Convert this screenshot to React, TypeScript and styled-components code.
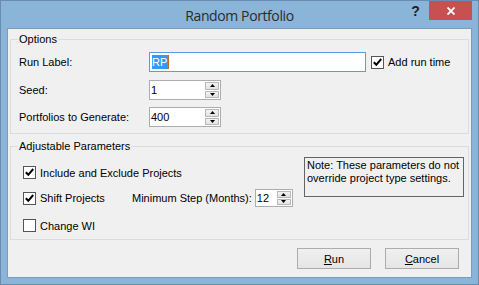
import React from 'react';
import styled, { createGlobalStyle } from 'styled-components';

const Global = createGlobalStyle`
  html, body { margin: 0; padding: 0; }
  body {
    width: 479px; height: 285px; overflow: hidden;
    background: #8ab4d8;
    font-family: "Liberation Sans", Arial, sans-serif;
    font-size: 11px; color: #000;
  }
  * { box-sizing: border-box; }
`;

const Window = styled.div`
  position: relative;
  width: 479px; height: 285px;
  border: 1px solid #6a8cae;
  background: #8ab4d8;
  display: flex; flex-direction: column;
  padding: 0 6px 6px;
`;

const TitleBar = styled.div`
  height: 27px;
  display: flex; align-items: center; justify-content: center;
  font-family: "Segoe UI", "Open Sans", sans-serif;
  font-size: 14px; color: #2b2b2b;
  letter-spacing: -0.4px;
  padding-top: 1px;
`;

const Controls = styled.div`
  position: absolute; top: 0; right: 6px;
  display: flex; align-items: flex-start;
`;

const HelpButton = styled.div`
  width: 27px; height: 19px;
  display: flex; align-items: center; justify-content: center;
  font-family: "Liberation Sans", Arial, sans-serif;
  font-weight: bold; font-size: 14px; color: #1e1e1e;
`;

const CloseButton = styled.div`
  width: 43px; height: 19px;
  background: #c75050;
  display: flex; align-items: center; justify-content: center;
`;

const Client = styled.div`
  flex: 1;
  background: #f0f0f0;
  border: 1px solid #7a9cc0;
  display: flex; flex-direction: column;
  padding: 4px 2px 0;
`;

const Group = styled.fieldset<{ $mt?: number }>`
  margin: ${p => p.$mt ?? 0}px 0 0;
  border: 1px solid #dcdcdc;
  padding: 0;
  min-width: 0;
`;

const Legend = styled.legend`
  margin-left: 7px;
  padding: 0 1px;
  line-height: 13px;
  font-size: 11px;
`;

const OptionsBody = styled.div`
  display: flex; flex-direction: column;
  padding: 6px 0 6px 8px;
`;

const Row = styled.div<{ $mt?: number }>`
  display: flex; align-items: center;
  height: 20px;
  margin-top: ${p => p.$mt ?? 0}px;
`;

const Label = styled.div`
  width: 130px;
  white-space: nowrap;
`;

const TextBox = styled.div<{ $w: number; $focus?: boolean }>`
  width: ${p => p.$w}px; height: 20px;
  background: #fff;
  border: 1px solid ${p => (p.$focus ? '#569de5' : '#abadb3')};
  display: flex; align-items: center;
  padding-left: 2px;
  white-space: nowrap;
`;

const Selected = styled.span`
  background: #3399ff; color: #fff;
  line-height: 14px; padding: 0 1px 0 0;
`;

const Caret = styled.span`
  display: inline-block; width: 1px; height: 14px; background: #cc6a1a;
`;

const SpinBox = styled.div<{ $w: number; $h: number }>`
  width: ${p => p.$w}px; height: ${p => p.$h}px;
  background: #fff;
  border: 1px solid #abadb3;
  display: flex; align-items: stretch;
`;

const SpinText = styled.div`
  flex: 1; display: flex; align-items: center; padding-left: 1px;
`;

const SpinButtons = styled.div`
  width: 15px;
  display: flex; flex-direction: column;
  padding: 1px 1px 1px 0;
  gap: 1px;
`;

const SpinBtn = styled.div`
  flex: 1;
  background: linear-gradient(#f2f2f2, #e2e2e2);
  border: 1px solid #b9b9b9;
  display: flex; align-items: center; justify-content: center;
`;

const CheckItem = styled.label<{ $w?: number }>`
  display: flex; align-items: center; gap: 4px;
  ${p => (p.$w ? `width: ${p.$w}px;` : '')}
  white-space: nowrap;
`;

const Box = styled.span`
  width: 13px; height: 13px;
  border: 1px solid #555;
  background: #fff;
  display: flex; align-items: center; justify-content: center;
  flex: none;
`;

const AdjustBody = styled.div`
  display: flex;
  padding: 4px 4px 7px 12px;
`;

const LeftCol = styled.div`
  display: flex; flex-direction: column;
  padding-top: 9px;
  width: 280px;
`;

const CheckRow = styled.div<{ $mt?: number; $h?: number }>`
  display: flex; align-items: center;
  height: ${p => p.$h ?? 13}px;
  margin-top: ${p => p.$mt ?? 0}px;
`;

const StepLabel = styled.span`
  margin-right: 3px; white-space: nowrap;
`;

const Note = styled.div`
  margin-left: auto;
  width: 160px; height: 40px;
  border: 1px solid #646464;
  padding: 1px 2px;
  line-height: 13px;
`;

const ButtonRow = styled.div`
  display: flex; justify-content: flex-end; gap: 14px;
  padding: 8px 10px 0 0;
`;

const Button = styled.div`
  width: 74px; height: 21px;
  border: 1px solid #acacac;
  background: linear-gradient(#f0f0f0, #e5e5e5);
  display: flex; align-items: center; justify-content: center;
`;

const Check = () => (
  <svg width="9" height="9" viewBox="0 0 9 9">
    <path d="M0.8 4.2 L3.3 6.8 L8.2 1" fill="none" stroke="#000" strokeWidth="2" />
  </svg>
);

const CheckBox: React.FC<{ checked?: boolean }> = ({ checked }) => <Box>{checked && <Check />}</Box>;

const Up = () => (
  <svg width="5" height="3" viewBox="0 0 5 3"><path d="M2.5 0 L5 3 L0 3 Z" fill="#000" /></svg>
);
const Down = () => (
  <svg width="5" height="3" viewBox="0 0 5 3"><path d="M0 0 L5 0 L2.5 3 Z" fill="#000" /></svg>
);

const Spin: React.FC<{ value: string; w: number; h: number }> = ({ value, w, h }) => (
  <SpinBox $w={w} $h={h}>
    <SpinText>{value}</SpinText>
    <SpinButtons>
      <SpinBtn><Up /></SpinBtn>
      <SpinBtn><Down /></SpinBtn>
    </SpinButtons>
  </SpinBox>
);

export default function App() {
  return (
    <>
      <Global />
      <Window>
        <TitleBar>Random Portfolio</TitleBar>
        <Controls>
          <HelpButton>?</HelpButton>
          <CloseButton>
            <svg width="8" height="8" viewBox="0 0 8 8">
              <path d="M0.5 0.5 L7.5 7.5 M7.5 0.5 L0.5 7.5" stroke="#fff" strokeWidth="1.8" />
            </svg>
          </CloseButton>
        </Controls>
        <Client>
          <Group>
            <Legend>Options</Legend>
            <OptionsBody>
              <Row>
                <Label>Run Label:</Label>
                <TextBox $w={217} $focus><Selected>RP</Selected><Caret /></TextBox>
                <CheckItem style={{ marginLeft: 5 }}>
                  <CheckBox checked />
                  Add run time
                </CheckItem>
              </Row>
              <Row $mt={8}>
                <Label>Seed:</Label>
                <Spin value="1" w={72} h={20} />
              </Row>
              <Row $mt={7}>
                <Label>Portfolios to Generate:</Label>
                <Spin value="400" w={72} h={20} />
              </Row>
            </OptionsBody>
          </Group>
          <Group $mt={6}>
            <Legend>Adjustable Parameters</Legend>
            <AdjustBody>
              <LeftCol>
                <CheckRow>
                  <CheckItem><CheckBox checked />Include and Exclude Projects</CheckItem>
                </CheckRow>
                <CheckRow $mt={10} $h={18}>
                  <CheckItem $w={109}><CheckBox checked />Shift Projects</CheckItem>
                  <StepLabel>Minimum Step (Months):</StepLabel>
                  <Spin value="12" w={38} h={18} />
                </CheckRow>
                <CheckRow $mt={12}>
                  <CheckItem><CheckBox />Change WI</CheckItem>
                </CheckRow>
              </LeftCol>
              <Note>Note: These parameters do not override project type settings.</Note>
            </AdjustBody>
          </Group>
          <ButtonRow>
            <Button><u>R</u>un</Button>
            <Button><u>C</u>ancel</Button>
          </ButtonRow>
        </Client>
      </Window>
    </>
  );
}
